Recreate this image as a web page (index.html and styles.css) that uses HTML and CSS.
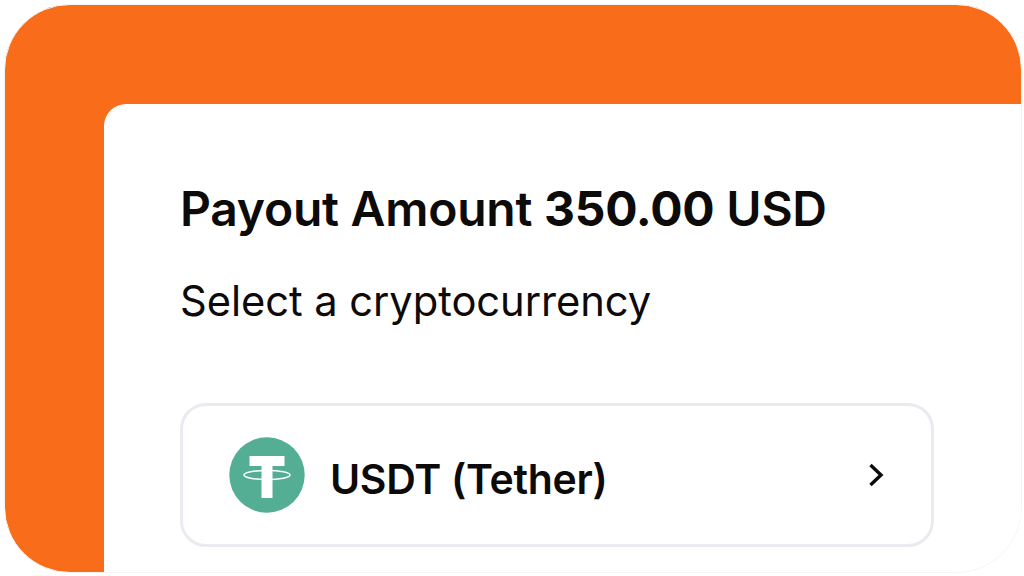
FILE: index.html
```html
<!DOCTYPE html>
<html lang="en">
<head>
<meta charset="utf-8">
<title>Payout</title>
<link rel="stylesheet" href="styles.css">
</head>
<body>
<div class="frame">
  <div class="panel">
    <main class="card">
      <h1 class="title">Payout Amount <span class="amount">350.00</span> USD</h1>
      <p class="subtitle">Select a cryptocurrency</p>
      <button class="option" type="button">
        <svg class="coin" viewBox="0 0 76 76" aria-hidden="true">
          <circle cx="38" cy="38" r="37.700" fill="#53ae94"/>
          <path d="M20.500 19H55.500V29H43.500V61H32.500V29H20.500Z" fill="#fff"/>
          <ellipse cx="38" cy="38" rx="23" ry="4.500" fill="none" stroke="#fff" stroke-width="1.500"/>
        </svg>
        <span class="option-label">USDT (Tether)</span>
        <svg class="chevron" viewBox="0 0 16 24" aria-hidden="true">
          <path d="M2.500 2L13 12L2.500 22" fill="none" stroke="#0d0a0a" stroke-width="3.400"/>
        </svg>
      </button>
    </main>
  </div>
</div>
</body>
</html>
```

FILE: styles.css
```css
* { box-sizing: border-box; }
html, body { margin: 0; height: 576px; overflow: hidden; background: #fff; }
body { font-family: Inter, "Liberation Sans", sans-serif; color: #0d0a0a; }
.frame { height: 576px; padding: 4px 2px 3px 4px; }
.panel {
  height: 100%;
  background:
    linear-gradient(to right, #f86c1a 120px, transparent 120px),
    linear-gradient(#f86c1a 120px, transparent 120px),
    #fff;
  border: 1px solid #f7f3f1;
  border-radius: 66px;
  padding: 99px 0 0 99px;
  overflow: hidden;
  display: flex;
}
.card {
  flex: 1;
  background: #fff;
  border-radius: 22px 0 0 0;
  padding: 78px 87px 0 76px;
}
.title {
  margin: 0;
  font-size: 48px;
  line-height: 54px;
  font-weight: 600;
  letter-spacing: -0.25px;
}
.amount { font-weight: 700; }
.subtitle {
  margin: 40px 0 0;
  font-size: 41.7px;
  line-height: 50px;
  font-weight: 400;
  letter-spacing: -0.05px;
}
.option {
  margin-top: 77px;
  width: 100%;
  height: 144px;
  display: flex;
  align-items: center;
  padding: 0 47px 0 46px;
  background: #fff;
  border: 3px solid #e9ebf0;
  border-radius: 26px;
  font: inherit;
  color: inherit;
}
.coin { width: 76px; height: 76px; flex: none; }
.option-label {
  margin: 8px 0 0 25px;
  flex: 1;
  text-align: left;
  font-size: 41px;
  font-weight: 600;
  letter-spacing: -0.3px;
}
.chevron { width: 16px; height: 24px; flex: none; }
```
